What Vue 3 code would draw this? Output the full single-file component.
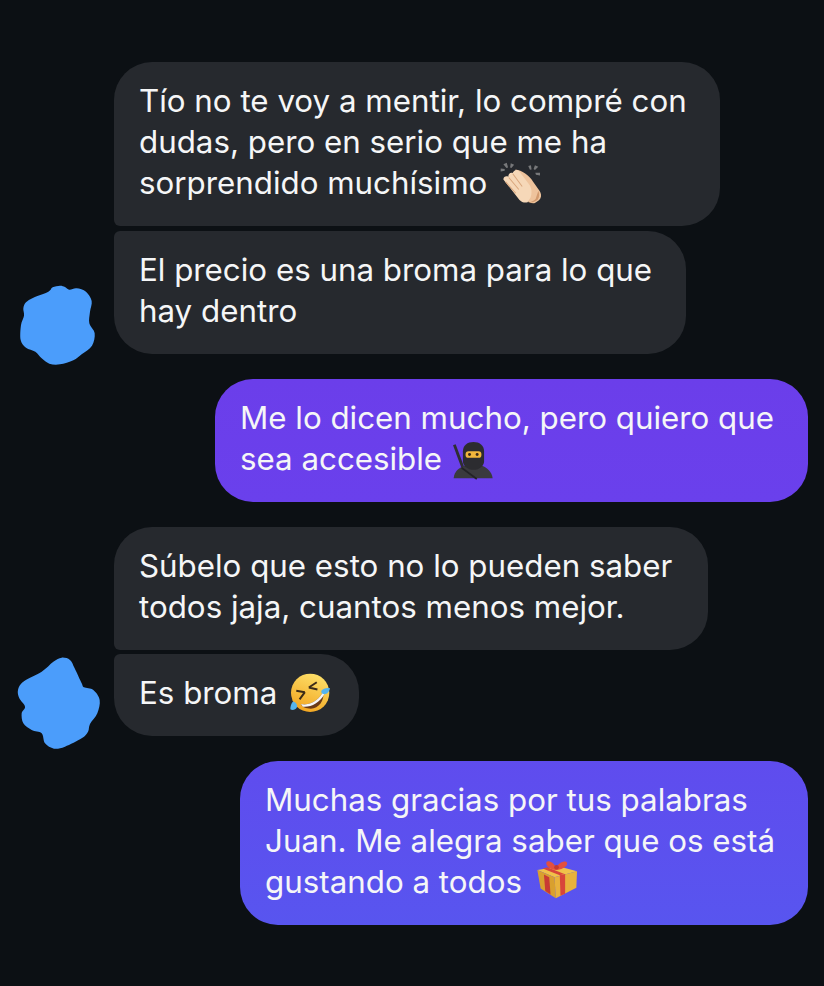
<template>
  <div class="chat">
    <div class="group">
      <svg class="blob" viewBox="0 0 100 100"><path :d="blobOne" fill="#4b9dfb" /></svg>
      <div class="bubble in first tight">
        <span class="line">Tío no te voy a mentir, lo compré con</span>
        <span class="line">dudas, pero en serio que me ha</span>
        <span class="line">sorprendido muchísimo
          <svg class="emoji clap" viewBox="55 38 125 125">
            <g fill="#77787a">
              <path d="M68 45l10-5 4 14-5 2z" />
              <path d="M90 42l10 4-8 10-4-2z" />
              <path d="M60 57l12 2 0 5-12 2z" />
              <path d="M142 50l8-2 2 12-5 1z" />
              <path d="M162 48l10 4-10 10-4-3z" />
              <path d="M163 70l14 0 0 8-12-2z" />
            </g>
            <path d="M104 60c18 2 42 18 52 36l20 28c6 10 6 20-2 28l-12 8c-10 2-20-2-24-8l-34-44z" fill="#eec39c" />
            <path d="M68 90c0-9 9-11 15-8-1-8 6-14 13-11 1-7 11-13 18-7l33 44c6 12 6 24 2 36l-9 14c-10 2-18-1-24-7z" fill="#f6d8b8" />
            <path d="M84 84l30 36M96 73l28 38M75 97l30 34" stroke="#d9a67c" stroke-width="3" fill="none" />
            <path d="M138 160c10 0 24-4 32-10 6-8 6-18 2-26l-8 24c-6 6-16 10-26 12z" fill="#d29a6e" />
          </svg>
        </span>
      </div>
      <div class="bubble in joined">
        <span class="line">El precio es una broma para lo que</span>
        <span class="line">hay dentro</span>
      </div>
    </div>

    <div class="bubble out upper">
      <span class="line">Me lo dicen mucho, pero quiero que</span>
      <span class="line">sea accesible
        <svg class="emoji ninja" viewBox="30 22 130 115">
          <path d="M36 32l8-3 36 96-8 3z" fill="#2e2e33" />
          <path d="M38 132c2-22 16-32 34-38h52c14 6 30 18 32 38z" fill="#3a3a3e" />
          <path d="M66 50c0-18 14-28 32-28s32 10 32 28v30c0 14-14 26-32 26S66 94 66 80z" fill="#2c2c30" />
          <path d="M62 100l46 34" stroke="#232327" stroke-width="5" fill="none" />
          <rect x="74" y="50" width="48" height="20" rx="9" fill="#f2b63c" />
          <circle cx="86" cy="60" r="4.5" fill="#3a2a18" />
          <circle cx="109" cy="60" r="4.5" fill="#3a2a18" />
        </svg>
      </span>
    </div>

    <div class="group">
      <svg class="blob second" viewBox="0 0 100 105"><path :d="blobTwo" fill="#4b9dfb" /></svg>
      <div class="bubble in first wide">
        <span class="line">Súbelo que esto no lo pueden saber</span>
        <span class="line">todos jaja, cuantos menos mejor.</span>
      </div>
      <div class="bubble in joined short">
        <span class="line">Es broma
          <svg class="emoji rofl" viewBox="25 18 125 118">
            <defs>
              <linearGradient id="roflFace" x1="0.7" y1="0" x2="0.3" y2="1">
                <stop offset="0" stop-color="#fde06a" />
                <stop offset="1" stop-color="#f2a41f" />
              </linearGradient>
            </defs>
            <circle cx="88" cy="78" r="58" fill="url(#roflFace)" />
            <path d="M84 62l24-16M84 62l26 6" stroke="#3a2a18" stroke-width="6" fill="none" />
            <path d="M72 76l-26-4M72 76l-16 22" stroke="#3a2a18" stroke-width="6" fill="none" />
            <path d="M60 112c30 6 58-14 68-40 4 30-14 54-38 54-14 0-26-4-30-14z" fill="#6b3a16" />
            <path d="M60 112c30 6 58-14 68-40l2 12c-14 24-38 38-64 36z" fill="#f6f6f6" />
            <path d="M122 72c6-8 16-10 26-8-2 10-8 18-18 18-6 0-10-4-8-10z" fill="#55b4ee" />
            <path d="M36 104c8 2 14 8 12 18-4 8-14 10-20 6 0-8 2-18 8-24z" fill="#55b4ee" />
          </svg>
        </span>
      </div>
    </div>

    <div class="bubble out lower tight">
      <span class="line">Muchas gracias por tus palabras</span>
      <span class="line">Juan. Me alegra saber que os está</span>
      <span class="line">gustando a todos
        <svg class="emoji gift" viewBox="32 18 130 125">
          <path d="M36 50l66-10 54 14-68 18z" fill="#f0c24a" />
          <path d="M36 50l52 22 4 64-46-30z" fill="#d9a02e" />
          <path d="M88 72l68-18-2 50-62 32z" fill="#e8b23c" />
          <path d="M52 46l52 20 14-4-52-20z" fill="#d8453a" />
          <path d="M56 64l16 8 4 52-16-10z" fill="#c93a34" />
          <path d="M104 66l16-4 0 60-14 6z" fill="#d8453a" />
          <path d="M92 42c-6-16-24-22-28-16-4 8 6 22 26 24 16 0 38-8 36-22-4-8-24-2-32 14z" fill="#e2503f" />
          <circle cx="94" cy="42" r="7" fill="#c23a30" />
        </svg>
      </span>
    </div>
  </div>
</template>

<script setup>
// closed curve through hand-picked outline points (crop coords, 3x)
function outline(points) {
  const pts = points.map(([x, y]) => [x / 3, y / 3]);
  const n = pts.length;
  let d = `M${pts[0][0]} ${pts[0][1]}`;
  for (let i = 0; i < n; i++) {
    const p0 = pts[(i - 1 + n) % n];
    const p1 = pts[i];
    const p2 = pts[(i + 1) % n];
    const p3 = pts[(i + 2) % n];
    const c1 = [p1[0] + (p2[0] - p0[0]) / 6, p1[1] + (p2[1] - p0[1]) / 6];
    const c2 = [p2[0] - (p3[0] - p1[0]) / 6, p2[1] - (p3[1] - p1[1]) / 6];
    d += `C${c1[0]} ${c1[1]} ${c2[0]} ${c2[1]} ${p2[0]} ${p2[1]}`;
  }
  return d + 'Z';
}

const blobOne = outline([
  [40, 100], [48, 82], [70, 68], [115, 50], [128, 37], [150, 32], [165, 36], [178, 44], [200, 40], [228, 50],
  [245, 78], [240, 110], [238, 145], [254, 175], [246, 212], [215, 238], [190, 256], [150, 268], [118, 266],
  [95, 250], [76, 230], [48, 218], [32, 195], [33, 150], [42, 122],
]);

const blobTwo = outline([
  [24, 120], [40, 95], [95, 65], [130, 35], [155, 23], [180, 30], [194, 55], [215, 100], [222, 112],
  [250, 120], [269, 150], [262, 190], [240, 222], [234, 245], [215, 265], [165, 290], [132, 296],
  [105, 280], [95, 250], [65, 240], [40, 220], [35, 190], [45, 170], [28, 145],
]);
</script>

<style>
html,
body {
  margin: 0;
  background: #0c1014;
}
</style>

<style scoped>
.chat {
  box-sizing: border-box;
  width: 824px;
  height: 986px;
  padding: 62px 16px 0 114px;
  display: flex;
  flex-direction: column;
  gap: 25px;
  background: #0c1014;
  font-family: Inter, "Liberation Sans", sans-serif;
  font-size: 31.3px;
  line-height: 41px;
  color: #f5f6f7;
  overflow: hidden;
}

.group {
  position: relative;
  display: flex;
  flex-direction: column;
  align-items: flex-start;
  gap: 4.5px;
}

.bubble {
  box-sizing: border-box;
  width: fit-content;
  padding: 19px 34px 22px 25px;
  border-radius: 38px;
}

.line {
  display: block;
  height: 41px;
  white-space: nowrap;
}

.in {
  background: #26292e;
}

.in.first {
  border-bottom-left-radius: 6px;
}

.in.joined {
  border-top-left-radius: 6px;
}

.tight {
  padding-right: 33px;
}

.wide {
  padding-right: 36px;
}

.short {
  padding-right: 28px;
}

.out {
  align-self: flex-end;
}

.upper {
  background: linear-gradient(180deg, #6b3eea, #6a40ec);
}

.lower {
  background: linear-gradient(180deg, #5f4cee, #5855ef);
}

.blob {
  position: absolute;
  left: -104px;
  bottom: -21.5px;
  width: 100px;
  height: 100px;
}

.blob.second {
  height: 105px;
  bottom: -19px;
}

.emoji {
  display: inline-block;
  vertical-align: -10px;
  margin-top: -14px;
  margin-left: 3px;
}

.clap {
  width: 42px;
  height: 42px;
}

.ninja {
  width: 43px;
  height: 38px;
  margin-left: 0;
}

.rofl {
  width: 42px;
  height: 39px;
  vertical-align: -8px;
}

.gift {
  width: 43px;
  height: 42px;
  margin-left: 5px;
  vertical-align: -8px;
}
</style>
